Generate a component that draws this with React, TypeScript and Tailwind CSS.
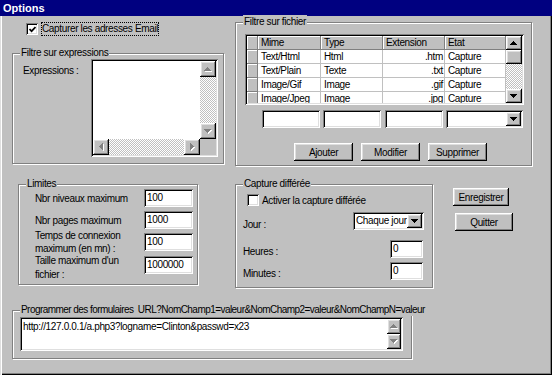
import type { ReactNode } from "react";

const raised =
  "bg-[#c0c0c0] shadow-[inset_-1px_-1px_0_#000,inset_1px_1px_0_#fff,inset_-2px_-2px_0_#808080,inset_2px_2px_0_#dfdfdf]";
const sunken =
  "shadow-[inset_1px_1px_0_#808080,inset_-1px_-1px_0_#fff,inset_2px_2px_0_#000,inset_-2px_-2px_0_#dfdfdf]";
const etched = "border border-[#808080] shadow-[inset_1px_1px_0_#fff,1px_1px_0_#fff]";
const track = "bg-[image:repeating-conic-gradient(#c0c0c0_0%_25%,#fff_0%_50%)] bg-[length:2px_2px]";
const hdr =
  "bg-[#c0c0c0] border-r border-b border-[#808080] shadow-[inset_1px_1px_0_#fff] leading-[13px] whitespace-nowrap overflow-hidden";

type Dir = "up" | "down" | "left" | "right";

const arrowPaths: Record<Dir, string> = {
  up: "M3 0h1v1h1v1h1v1h1v1H0V3h1V2h1V1h1z",
  down: "M0 0h7v1H6v1H5v1H4v1H3V3H2V2H1V1H0z",
  left: "M3 0h1v7H3V6H2V5H1V4H0V3h1V2h1V1h1z",
  right: "M0 0h1v1h1v1h1v1h1v1H3v1H2v1H1v1H0z",
};

function Arrow({ dir, off = false }: { dir: Dir; off?: boolean }) {
  const v = dir === "up" || dir === "down";
  const w = v ? 8 : 5;
  const h = v ? 5 : 8;
  return (
    <svg width={w} height={h} viewBox={`0 0 ${w} ${h}`} shapeRendering="crispEdges">
      {off && <path d={arrowPaths[dir]} fill="#fff" transform="translate(1 1)" />}
      <path d={arrowPaths[dir]} fill={off ? "#808080" : "#000"} />
    </svg>
  );
}

function ScrollBtn({ dir, off, className = "" }: { dir: Dir; off?: boolean; className?: string }) {
  return (
    <div className={`${raised} flex items-center justify-center shrink-0 ${className}`}>
      <Arrow dir={dir} off={off} />
    </div>
  );
}

function Btn({ children, className = "" }: { children: ReactNode; className?: string }) {
  return (
    <div className={`${raised} flex items-center justify-center h-[18px] leading-[13px] ${className}`}>
      {children}
    </div>
  );
}

function Field({ value = "", className = "" }: { value?: string; className?: string }) {
  return (
    <div className={`${sunken} bg-white h-[18px] pl-[3px] leading-[18px] shrink-0 ${className}`}>{value}</div>
  );
}

function Combo({ value = "", className = "" }: { value?: string; className?: string }) {
  return (
    <div className={`${sunken} bg-white h-[18px] p-[2px] flex shrink-0 ${className}`}>
      <span className="flex-1 pl-px leading-[14px] overflow-hidden whitespace-nowrap">{value}</span>
      <ScrollBtn dir="down" className="w-[15px] h-[14px]" />
    </div>
  );
}

function Check({ on = false }: { on?: boolean }) {
  return (
    <div className={`${sunken} bg-white w-[12px] h-[12px] flex items-center justify-center shrink-0`}>
      {on && (
        <svg width="7" height="7" viewBox="0 0 7 7">
          <path d="M0.5 3 2.6 5.2 6.5 1" stroke="#000" strokeWidth="1.7" fill="none" />
        </svg>
      )}
    </div>
  );
}

function Group({
  label,
  className = "",
  labelClass = "",
  children,
}: {
  label: string;
  className?: string;
  labelClass?: string;
  children?: ReactNode;
}) {
  return (
    <div className={`relative shrink-0 ${etched} ${className}`}>
      <span
        className={`absolute -top-[8px] left-[7px] bg-[#c0c0c0] px-px leading-[13px] whitespace-pre ${labelClass}`}
      >
        {label}
      </span>
      {children}
    </div>
  );
}

const heads = ["Mime", "Type", "Extension", "Etat"];
const colW = ["w-[63px]", "w-[62px]", "w-[62px]", "w-[61px]"];
const rows = [
  ["Text/Html", "Html", ".htm", "Capture"],
  ["Text/Plain", "Texte", ".txt", "Capture"],
  ["Image/Gif", "Image", ".gif", "Capture"],
  ["Image/Jpeg", "Image", ".jpg", "Capture"],
];

function LimitRow({
  label,
  value,
  className = "",
  labelClass = "leading-[13px]",
}: {
  label: ReactNode;
  value: string;
  className?: string;
  labelClass?: string;
}) {
  return (
    <div className={`flex items-center h-[18px] ${className}`}>
      <div className={`w-[109px] whitespace-nowrap ${labelClass}`}>{label}</div>
      <Field value={value} className="w-[49px]" />
    </div>
  );
}

export default function App() {
  return (
    <div className="w-[552px] h-[375px] overflow-hidden bg-[#c0c0c0] flex flex-col text-[10px] tracking-[-0.35px] text-black font-['Liberation_Sans',Arial,sans-serif] shadow-[inset_1px_0_0_#dfdfdf,inset_2px_0_0_#fff,inset_-1px_-1px_0_#000,inset_-2px_-2px_0_#808080]">
      <div className="h-[16px] shrink-0 bg-[#000080] text-white text-[11px] tracking-normal font-bold pl-[3px] leading-[16px]">
        Options
      </div>

      {/* haut */}
      <div className="flex mt-[6px]">
        <div className="ml-[12px] w-[212px] flex flex-col">
          <div className="flex items-center h-[14px] pl-[14px] gap-[3px]">
            <Check on />
            <span className="border border-dotted border-black leading-[12px] whitespace-nowrap">
              Capturer les adresses Email
            </span>
          </div>
          <Group label="Filtre sur expressions" className="mt-[17px] h-[111px] flex items-start">
            <div className="ml-[10px] mt-[10px] w-[68px] leading-[13px] whitespace-nowrap">Expressions :</div>
            <div className={`${sunken} bg-white mt-[5px] w-[127px] h-[98px] p-[2px] flex flex-col`}>
              <div className="flex flex-1">
                <div className="flex-1" />
                <div className="w-[16px] flex flex-col">
                  <ScrollBtn dir="up" off className="h-[16px]" />
                  <div className={`flex-1 ${track}`} />
                  <ScrollBtn dir="down" off className="h-[16px]" />
                </div>
              </div>
              <div className="flex h-[16px]">
                <ScrollBtn dir="left" off className="w-[16px]" />
                <div className={`flex-1 ${track}`} />
                <ScrollBtn dir="right" off className="w-[16px]" />
                <div className="w-[16px] bg-[#c0c0c0]" />
              </div>
            </div>
          </Group>
        </div>

        <Group label="Filtre sur fichier" className="ml-[11px] w-[297px] h-[144px] flex flex-col">
          <div className={`${sunken} bg-white ml-[9px] mt-[11px] w-[279px] h-[71px] p-[2px] flex`}>
            <div className="flex-1 overflow-hidden flex flex-col">
              <div className="flex h-[14px] shrink-0">
                <div className={`${hdr} w-[11px]`} />
                {heads.map((h, i) => (
                  <div key={h} className={`${hdr} ${colW[i]} pl-[3px]`}>
                    {h}
                  </div>
                ))}
              </div>
              {rows.map((r) => (
                <div key={r[0]} className="flex h-[14px] shrink-0">
                  <div className={`${hdr} w-[11px]`} />
                  {r.map((c, i) => (
                    <div
                      key={i}
                      className={`${colW[i]} border-r border-b border-[#c0c0c0] leading-[13px] whitespace-nowrap overflow-hidden ${
                        i === 2 ? "text-right pr-px" : "pl-[3px]"
                      }`}
                    >
                      {c}
                    </div>
                  ))}
                </div>
              ))}
            </div>
            <div className="w-[16px] flex flex-col">
              <ScrollBtn dir="up" className="h-[14px]" />
              <div className={`${raised} h-[14px] shrink-0`} />
              <div className={`flex-1 ${track}`} />
              <ScrollBtn dir="down" className="h-[14px]" />
            </div>
          </div>
          <div className="flex mt-[5px] ml-[26px]">
            <Field className="w-[58px]" />
            <Field className="w-[58px] ml-[3px]" />
            <Field className="w-[58px] ml-[4px]" />
            <Combo className="w-[77px] ml-[3px]" />
          </div>
          <div className="flex mt-[15px] ml-[58px] gap-[8px]">
            <Btn className="w-[59px]">Ajouter</Btn>
            <Btn className="w-[59px]">Modifier</Btn>
            <Btn className="w-[59px]">Supprimer</Btn>
          </div>
        </Group>
      </div>

      {/* milieu */}
      <div className="flex items-start mt-[18px]">
        <Group label="Limites" className="ml-[18px] w-[180px] h-[101px] pt-[4px] pl-[16px]">
          <LimitRow label="Nbr niveaux maximum" value="100" />
          <LimitRow label="Nbr pages maximum" value="1000" className="mt-[4px]" />
          <LimitRow
            label={
              <>
                Temps de connexion
                <br />
                maximum (en mn) :
              </>
            }
            value="100"
            className="mt-[4px]"
          />
          <LimitRow
            label={
              <>
                Taille maximum d'un
                <br />
                fichier :
              </>
            }
            value="1000000"
            labelClass="leading-[14px] pt-[6px]"
            className="mt-[5px]"
          />
        </Group>

        <Group label="Capture différée" className="ml-[37px] w-[198px] h-[104px] flex flex-col">
          <div className="flex items-center h-[14px] mt-[8px] ml-[11px] gap-[3px]">
            <Check />
            <span className="leading-[13px] whitespace-nowrap">Activer la capture différée</span>
          </div>
          <div className="flex items-start mt-[5px] ml-[7px]">
            <div className="w-[110px] pt-[6px] leading-[13px]">Jour :</div>
            <Combo value="Chaque jour" className="w-[71px]" />
          </div>
          <div className="flex items-start mt-[9px] ml-[7px]">
            <div className="w-[147px] pt-[5px] leading-[13px]">Heures :</div>
            <Field value="0" className="w-[33px]" />
          </div>
          <div className="flex items-start mt-[4px] ml-[7px]">
            <div className="w-[147px] pt-[5px] leading-[13px]">Minutes :</div>
            <Field value="0" className="w-[33px]" />
          </div>
        </Group>

        <div className="ml-[20px] pt-[4px] flex flex-col">
          <Btn className="w-[56px]">Enregistrer</Btn>
          <Btn className="w-[58px] ml-[2px] mt-[7px]">Quitter</Btn>
        </div>
      </div>

      {/* bas */}
      <Group
        label="Programmer des formulaires  URL?NomChamp1=valeur&NomChamp2=valeur&NomChampN=valeur"
        labelClass="tracking-[-0.55px]"
        className="mt-[22px] ml-[12px] w-[400px] h-[49px]"
      >
        <div className={`${sunken} bg-white ml-[7px] mt-[6px] w-[383px] h-[34px] p-[2px] flex`}>
          <div className="flex-1 pl-px pt-px leading-[13px] whitespace-nowrap">
            http://127.0.0.1/a.php3?logname=Clinton&amp;passwd=x23
          </div>
          <div className="w-[14px] flex flex-col">
            <ScrollBtn dir="up" off className="h-[15px]" />
            <ScrollBtn dir="down" off className="h-[15px]" />
          </div>
        </div>
      </Group>
    </div>
  );
}
